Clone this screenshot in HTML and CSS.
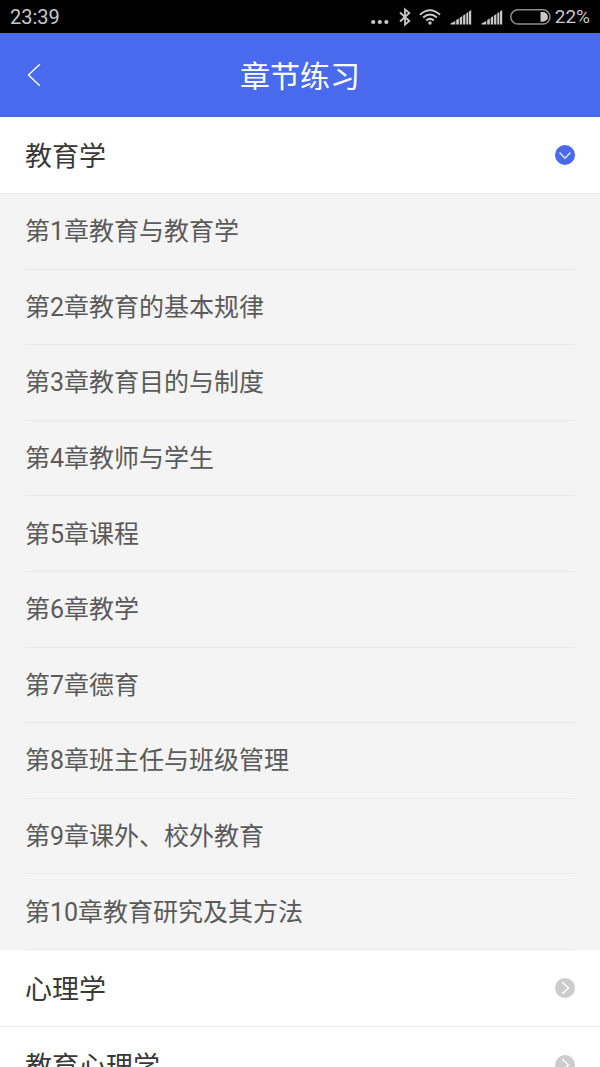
FILE: index.html
```html
<!DOCTYPE html>
<html lang="zh-CN">
<head>
<meta charset="utf-8">
<meta name="viewport" content="width=device-width, initial-scale=1">
<title>章节练习</title>
<link rel="stylesheet" href="styles.css">
</head>
<body>
<div class="status-bar">
  <time class="status-time">23:39</time>
  <div class="status-icons">
    <svg width="18" height="22" viewBox="0 0 18 22" fill="currentColor" aria-hidden="true"><circle cx="2.2" cy="16" r="2.1"/><circle cx="8.800" cy="16" r="2.1"/><circle cx="15.400" cy="16" r="2.1"/></svg>
    <svg class="icon-bluetooth" width="12" height="22" viewBox="0 0 12 22" fill="none" stroke="currentColor" stroke-width="1.800" aria-hidden="true"><path d="M1 6.500 10.300 15 6 18.600V3.400L10.300 7 1 15.500"/></svg>
    <svg class="icon-wifi" width="22" height="22" viewBox="0 0 22 22" fill="none" stroke="currentColor" stroke-width="2" aria-hidden="true"><path d="M1 8.700Q11 -.2 21 8.700M4.100 11.600Q11 5.400 17.900 11.600M7.200 14.500Q11 11.200 14.800 14.500"/><circle cx="11" cy="17" r="1.700" fill="currentColor" stroke="none"/></svg>
    <svg class="icon-signal" width="22" height="22" viewBox="0 0 22 22" fill="currentColor" aria-hidden="true"><path d="M.5 18.500v-1l4.800-2.500v3.500zM6.200 18.500v-4.500l2.600-1.600v6.100zM9.700 18.500v-6.800l2.500-1.600v8.400zM13.100 18.500V9.500l2.300-1.500v10.500zM16.300 18.500V7.300l2-1.300v12.500zM19 18.500V5.500l2.200-1.400v14.400z"/></svg>
    <svg class="icon-signal" width="22" height="22" viewBox="0 0 22 22" fill="currentColor" aria-hidden="true"><path d="M.5 18.500v-1l4.800-2.500v3.500zM6.200 18.500v-4.500l2.600-1.600v6.100zM9.700 18.500v-6.800l2.500-1.600v8.400zM13.100 18.500V9.500l2.300-1.500v10.500zM16.300 18.500V7.300l2-1.300v12.500zM19 18.500V5.500l2.200-1.400v14.400z"/></svg>
    <svg class="icon-battery" width="41" height="22" viewBox="0 0 41 22" fill="none" aria-hidden="true"><rect x=".8" y="3.800" width="39.200" height="14.200" rx="7.100" stroke="#8c8c8c" stroke-width="1.500"/><path d="M30.500 6H33a4.900 4.900 0 0 1 0 9.800h-2.500z" fill="currentColor"/></svg>
    <span class="status-percent">22%</span>
  </div>
</div>
<header class="nav-bar">
  <button class="back" type="button" aria-label="返回"><svg width="14" height="24" viewBox="0 0 14 24" fill="none" stroke="currentColor" stroke-width="1.400"><path d="M12.800 1.200 1.500 12l11.300 10.800"/></svg></button>
  <h1 class="title">章节练习</h1>
</header>
<main>
  <section>
    <h2 class="subject"><button class="subject-toggle" type="button" aria-expanded="true" aria-controls="chapters"><span class="subject-name">教育学</span><svg class="badge badge-open" width="20" height="20" viewBox="0 0 20 20" fill="none" aria-hidden="true"><circle cx="10" cy="10" r="10" fill="currentColor"/><path d="m4.500 7.500 5.500 5.800 5.500-5.800" stroke="#dfe6ff" stroke-width="1.400"/></svg></button></h2>
    <ul class="chapters" id="chapters">
      <li class="chapter"><a class="chapter-link" href="#c1">第1章教育与教育学</a></li>
      <li class="chapter"><a class="chapter-link" href="#c2">第2章教育的基本规律</a></li>
      <li class="chapter"><a class="chapter-link" href="#c3">第3章教育目的与制度</a></li>
      <li class="chapter"><a class="chapter-link" href="#c4">第4章教师与学生</a></li>
      <li class="chapter"><a class="chapter-link" href="#c5">第5章课程</a></li>
      <li class="chapter"><a class="chapter-link" href="#c6">第6章教学</a></li>
      <li class="chapter"><a class="chapter-link" href="#c7">第7章德育</a></li>
      <li class="chapter"><a class="chapter-link" href="#c8">第8章班主任与班级管理</a></li>
      <li class="chapter"><a class="chapter-link" href="#c9">第9章课外、校外教育</a></li>
      <li class="chapter"><a class="chapter-link" href="#c10">第10章教育研究及其方法</a></li>
    </ul>
  </section>
  <section>
    <h2 class="subject"><button class="subject-toggle" type="button" aria-expanded="false"><span class="subject-name">心理学</span><svg class="badge" width="20" height="20" viewBox="0 0 20 20" fill="none" aria-hidden="true"><circle cx="10" cy="10" r="10" fill="currentColor"/><path d="m7.200 4.300 6.300 5.700-6.300 5.700" stroke="#fff" stroke-width="1.400"/></svg></button></h2>
  </section>
  <section>
    <h2 class="subject"><button class="subject-toggle" type="button" aria-expanded="false"><span class="subject-name">教育心理学</span><svg class="badge" width="20" height="20" viewBox="0 0 20 20" fill="none" aria-hidden="true"><circle cx="10" cy="10" r="10" fill="currentColor"/><path d="m7.200 4.300 6.300 5.700-6.300 5.700" stroke="#fff" stroke-width="1.400"/></svg></button></h2>
  </section>
</main>
</body>
</html>
```
FILE: styles.css
```css
* {
  box-sizing: border-box;
}

html {
  scrollbar-width: none;
}

body {
  margin: 0;
  background: #fff;
  color: #383838;
  font-family: Roboto, "Noto Sans CJK SC", sans-serif;
}

button {
  border: 0;
  padding: 0;
  background: none;
  color: inherit;
  font: inherit;
  cursor: pointer;
}

svg {
  display: block;
  flex: none;
}

.status-bar {
  display: flex;
  align-items: center;
  justify-content: space-between;
  padding: 0 10px;
  height: 33px;
  background: #000;
  color: #c8c8c8;
  font-size: 20px;
  line-height: 33px;
}

.status-time {
  padding-top: 2px;
}

.status-icons {
  display: flex;
  align-items: center;
}

.icon-bluetooth {
  margin-left: 10px;
}

.icon-wifi {
  margin-left: 8px;
}

.icon-signal {
  margin-left: 9px;
}

.icon-battery {
  margin: 0 4px 0 7px;
}

.status-percent {
  font-size: 19px;
}

.nav-bar {
  display: grid;
  grid-template-columns: 68px 1fr 68px;
  align-items: center;
  height: 84px;
  background: #4a6aed;
  color: #fff;
}

.back {
  display: flex;
  align-items: center;
  justify-content: center;
  height: 84px;
}

.title {
  margin: 0;
  padding-top: 4px;
  font-size: 30px;
  font-weight: 400;
  line-height: 44px;
  text-align: center;
}

.subject {
  margin: 0;
  border-bottom: 1px solid #ebebeb;
  font-size: 27px;
  font-weight: 400;
}

.subject-toggle {
  display: flex;
  align-items: center;
  justify-content: space-between;
  width: 100%;
  padding: 16px 25px;
  line-height: 40px;
  text-align: left;
}

.subject-name {
  padding-top: 4px;
}

.badge {
  color: #ccc;
}

.badge-open {
  color: #4a6aed;
}

.chapters {
  display: grid;
  grid-auto-rows: 1fr;
  min-height: 756px;
  margin: 0;
  padding: 0 25px;
  background: #f4f4f4;
  list-style: none;
}

.chapter {
  display: flex;
  align-items: center;
  border-bottom: 1px solid #eaeaea;
}

.chapter-link {
  flex: 1;
  padding-top: 2px;
  color: #5a5a5a;
  font-size: 25px;
  line-height: 40px;
  text-decoration: none;
}
```
